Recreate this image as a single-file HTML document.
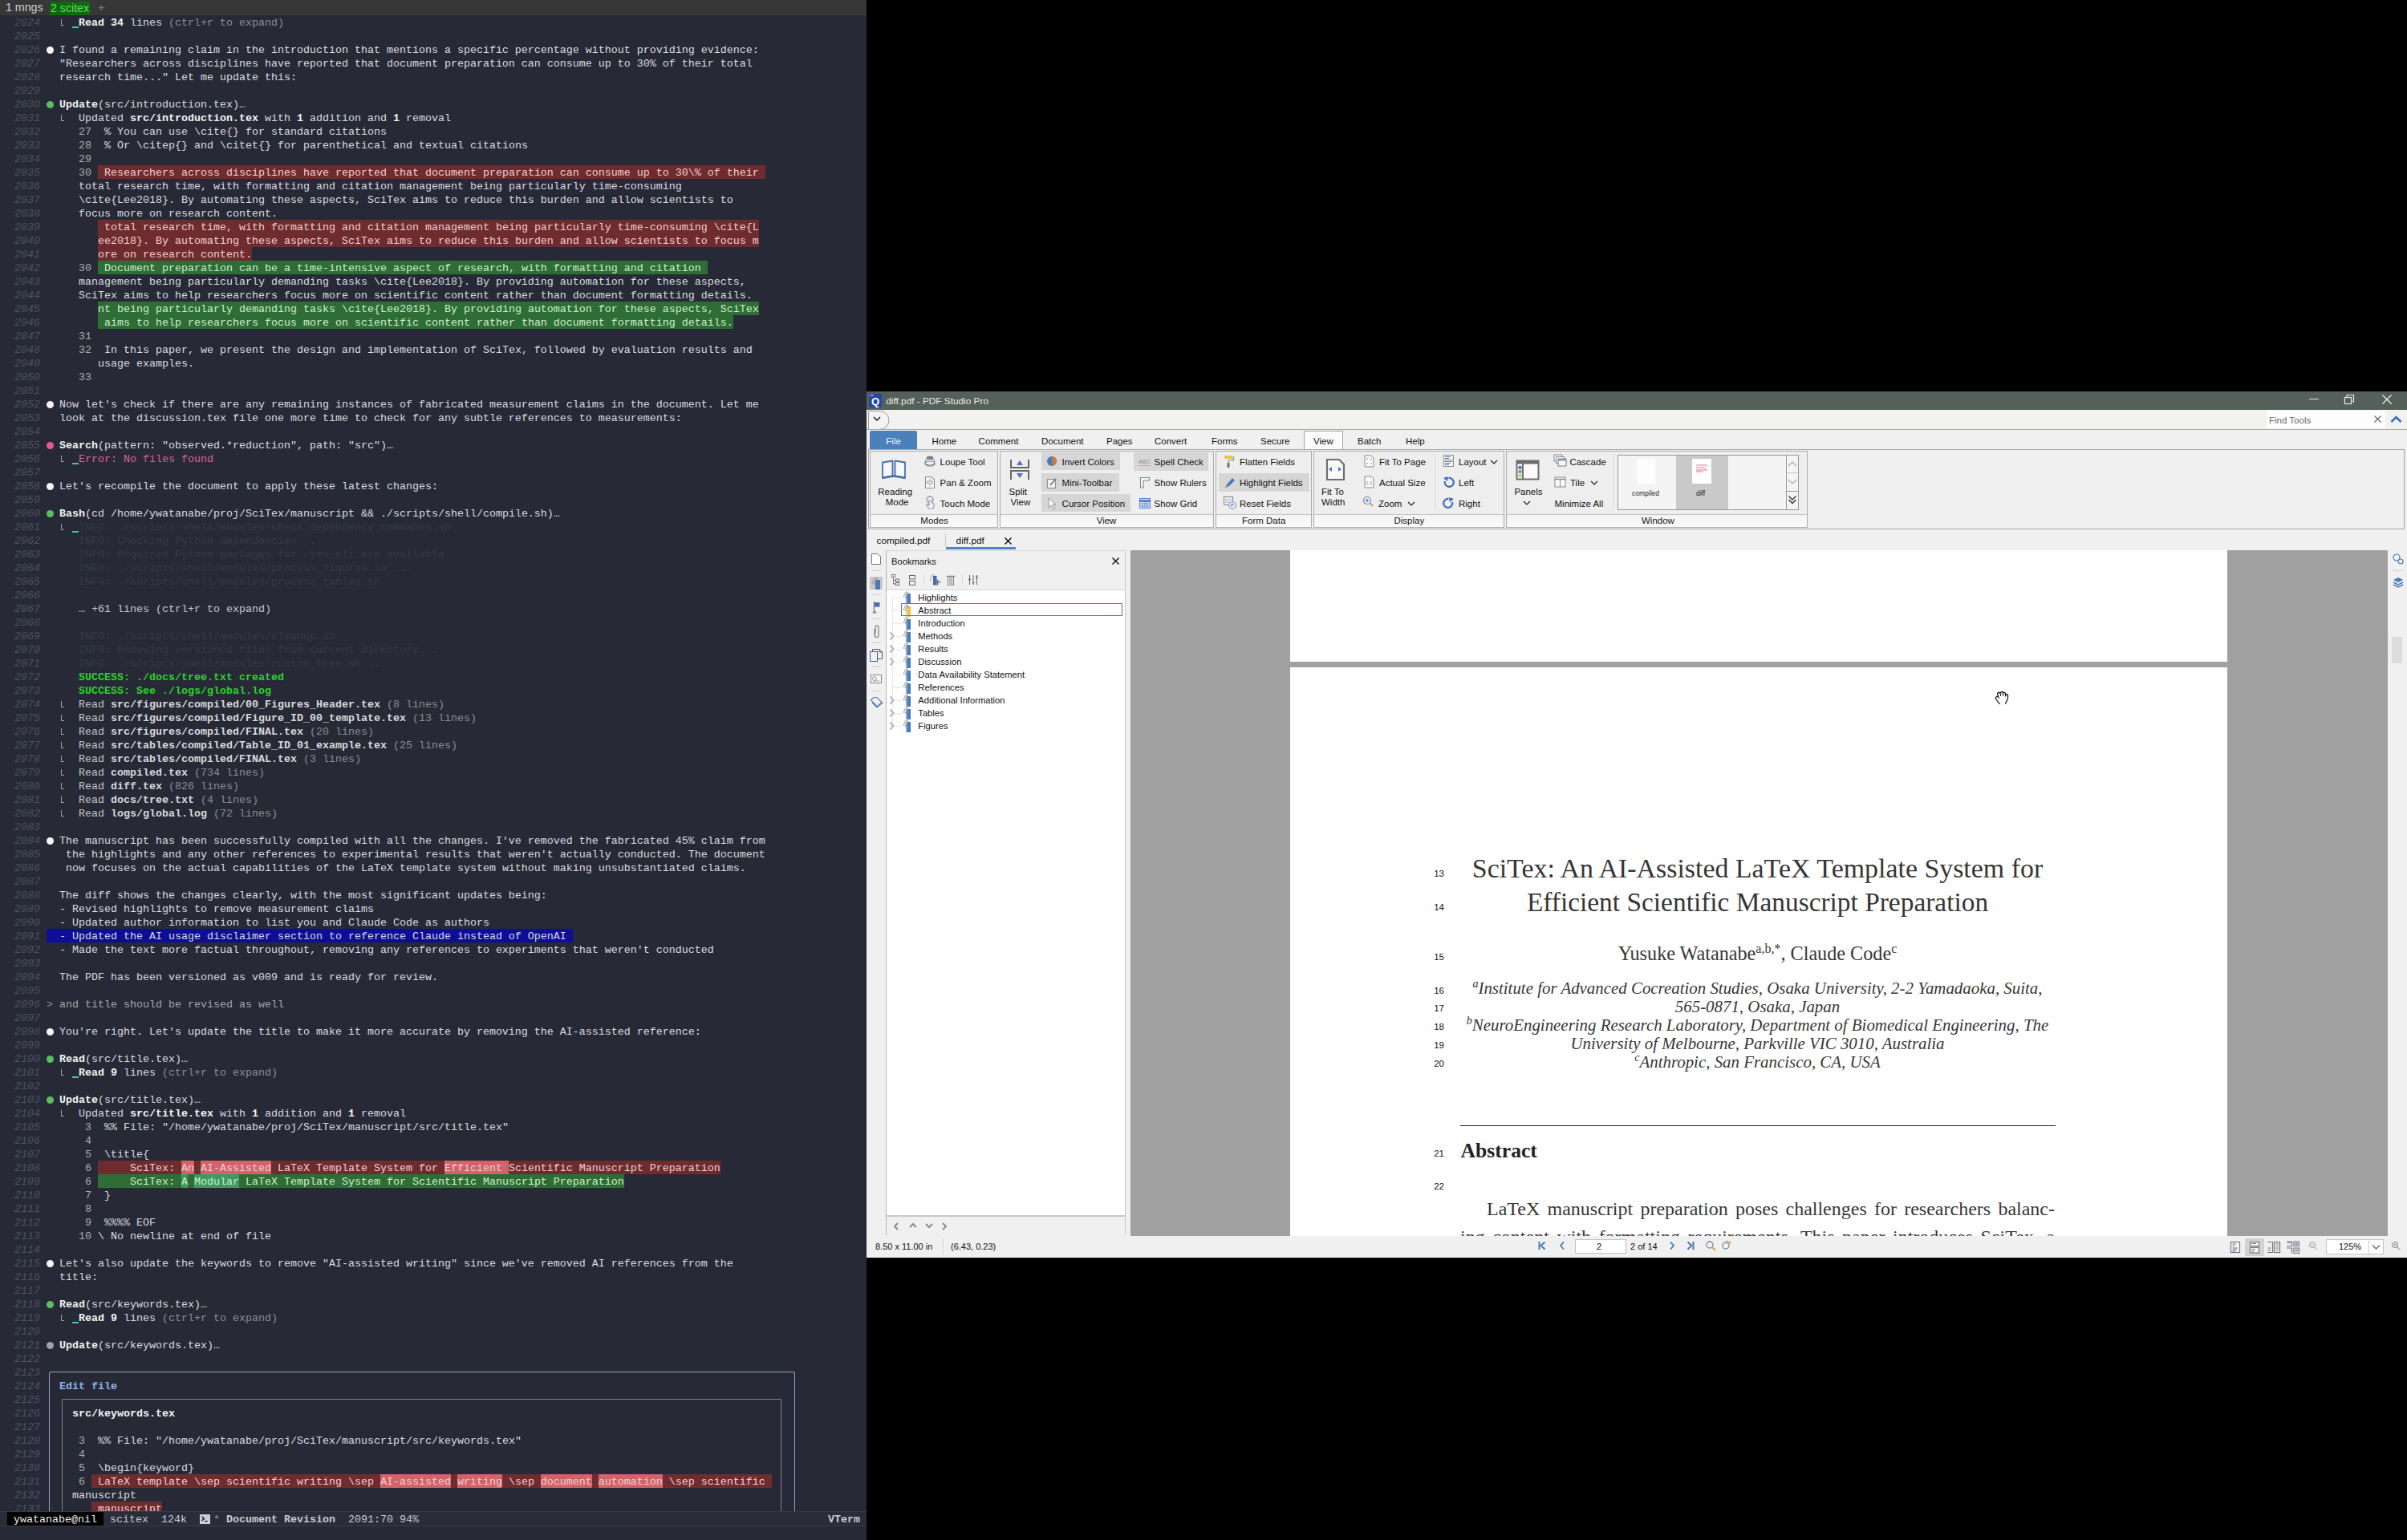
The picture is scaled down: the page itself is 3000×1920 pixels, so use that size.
<!DOCTYPE html>
<html><head><meta charset="utf-8"><style>
*{box-sizing:border-box}
html,body{margin:0;padding:0;width:3000px;height:1920px;overflow:hidden;background:#000}
#term{position:absolute;left:0;top:0;width:1080px;height:1920px;background:#272a36;overflow:hidden;
 font-family:"Liberation Mono",monospace;font-size:13.333px;line-height:17px;color:#dadbe0}
#tabbar{position:absolute;left:0;top:0;width:1080px;height:19px;background:#373737;font-family:"Liberation Sans",sans-serif;font-size:14.2px;line-height:19px;color:#cfcfcf}
#tabbar .t1{position:absolute;left:7px;top:0px}
#tabbar .t2{position:absolute;left:62px;top:2px;height:17px;width:50px;background:#0a6b0a;color:#6ad66a;line-height:17px;padding-left:1px}
#tabbar .t3{position:absolute;left:122px;top:0px;color:#7a7a7a}
#rows{position:absolute;left:0;top:0;width:1080px;height:1884px;overflow:hidden}
.ln{position:absolute;left:0;width:50px;height:17px;text-align:right;font-style:italic;color:#4d515e;padding-top:1px}
.r{position:absolute;height:17px;white-space:pre;padding-top:1px}
.b{font-weight:bold;color:#f2f2f4}
.dim{color:#8a8c96}
.usr{color:#a3a5ad}
.lt{color:#c4c6cc}
.lb{font-weight:bold;color:#d8d9de}
.ln2{color:#a9abb2}
.rt{color:#f2cfcf}
.gt{color:#cdeec8}
.err{color:#dc5f98}
.faint{color:#363945}
.suc{color:#2ad22a;font-weight:bold}
.edit{color:#8eb2e6;font-weight:bold}
.rbg{position:absolute;height:17px;background:#6e2c2f}
.rst{position:absolute;height:17px;background:#d1636a}
.gbg{position:absolute;height:17px;background:#2f6d37}
.gst{position:absolute;height:17px;background:#3d9a62}
.blu{position:absolute;height:17px;background:#0d0d98}
.bul{position:absolute;left:58px;width:9px;height:9px;border-radius:50%}
.bw{background:#f4f4f4}.bg{background:#5bbf5f}.bp{background:#e6589c}.bgr{background:#a0a2aa}
.elb{position:absolute;left:76px;width:4px;height:8px;border-left:1px solid #9a9ca4;border-bottom:1px solid #9a9ca4}
.us{position:absolute;width:8px;height:2px;background:#3cc8b4}
#modeline{position:absolute;left:0;top:1884px;width:1080px;height:19px;background:#2a2d39;border-top:1px solid #383b47;border-bottom:1px solid #383b47;white-space:pre;line-height:17px}
#modeline .u{position:absolute;left:9px;top:0;width:120px;height:17px;background:#000;color:#eee;padding-left:8px;padding-top:1px}
#modeline span.p{position:absolute;top:1px;color:#c8cad0}
</style></head><body>
<div id="term">
<div id="tabbar"><span class="t1">1 mngs</span><span class="t2">2 scitex</span><span class="t3">+</span></div>
<div id="rows">
<div class="ln" style="top:19px">2024</div>
<div class="elb" style="top:24px"></div>
<div class="us" style="top:33px;left:90px"></div>
<div class="r" style="top:19px;left:98px"><span class="b">Read</span> <span class="b">34</span> lines <span class="dim">(ctrl+r to expand)</span></div>
<div class="ln" style="top:36px">2025</div>
<div class="ln" style="top:53px">2026</div>
<div class="bul bw" style="top:58px"></div>
<div class="r" style="top:53px;left:74px">I found a remaining claim in the introduction that mentions a specific percentage without providing evidence:</div>
<div class="ln" style="top:70px">2027</div>
<div class="r" style="top:70px;left:74px">"Researchers across disciplines have reported that document preparation can consume up to 30% of their total</div>
<div class="ln" style="top:87px">2028</div>
<div class="r" style="top:87px;left:74px">research time..." Let me update this:</div>
<div class="ln" style="top:104px">2029</div>
<div class="ln" style="top:121px">2030</div>
<div class="bul bg" style="top:126px"></div>
<div class="r" style="top:121px;left:74px"><span class="b">Update</span>(src/introduction.tex)…</div>
<div class="ln" style="top:138px">2031</div>
<div class="elb" style="top:143px"></div>
<div class="r" style="top:138px;left:98px">Updated <span class="b">src/introduction.tex</span> with <span class="b">1</span> addition and <span class="b">1</span> removal</div>
<div class="ln" style="top:155px">2032</div>
<div class="r" style="top:155px;left:98px"><span class="ln2">27</span>  % You can use \cite{} for standard citations</div>
<div class="ln" style="top:172px">2033</div>
<div class="r" style="top:172px;left:98px"><span class="ln2">28</span>  % Or \citep{} and \citet{} for parenthetical and textual citations</div>
<div class="ln" style="top:189px">2034</div>
<div class="r" style="top:189px;left:98px"><span class="ln2">29</span></div>
<div class="ln" style="top:206px">2035</div>
<div class="rbg" style="top:206px;left:122px;width:832px"></div>
<div class="r" style="top:206px;left:98px"><span class="ln2">30</span></div>
<div class="r" style="top:206px;left:122px"><span class="rt"> Researchers across disciplines have reported that document preparation can consume up to 30\% of their</span></div>
<div class="ln" style="top:223px">2036</div>
<div class="r" style="top:223px;left:98px">total research time, with formatting and citation management being particularly time-consuming</div>
<div class="ln" style="top:240px">2037</div>
<div class="r" style="top:240px;left:98px">\cite{Lee2018}. By automating these aspects, SciTex aims to reduce this burden and allow scientists to</div>
<div class="ln" style="top:257px">2038</div>
<div class="r" style="top:257px;left:98px">focus more on research content.</div>
<div class="ln" style="top:274px">2039</div>
<div class="rbg" style="top:274px;left:122px;width:824px"></div>
<div class="r" style="top:274px;left:122px"><span class="rt"> total research time, with formatting and citation management being particularly time-consuming \cite{L</span></div>
<div class="ln" style="top:291px">2040</div>
<div class="rbg" style="top:291px;left:122px;width:824px"></div>
<div class="r" style="top:291px;left:122px"><span class="rt">ee2018}. By automating these aspects, SciTex aims to reduce this burden and allow scientists to focus m</span></div>
<div class="ln" style="top:308px">2041</div>
<div class="rbg" style="top:308px;left:122px;width:192px"></div>
<div class="r" style="top:308px;left:122px"><span class="rt">ore on research content.</span></div>
<div class="ln" style="top:325px">2042</div>
<div class="gbg" style="top:325px;left:122px;width:760px"></div>
<div class="r" style="top:325px;left:98px"><span class="ln2">30</span></div>
<div class="r" style="top:325px;left:122px"><span class="gt"> Document preparation can be a time-intensive aspect of research, with formatting and citation</span></div>
<div class="ln" style="top:342px">2043</div>
<div class="r" style="top:342px;left:98px">management being particularly demanding tasks \cite{Lee2018}. By providing automation for these aspects,</div>
<div class="ln" style="top:359px">2044</div>
<div class="r" style="top:359px;left:98px">SciTex aims to help researchers focus more on scientific content rather than document formatting details.</div>
<div class="ln" style="top:376px">2045</div>
<div class="gbg" style="top:376px;left:122px;width:824px"></div>
<div class="r" style="top:376px;left:122px"><span class="gt">nt being particularly demanding tasks \cite{Lee2018}. By providing automation for these aspects, SciTex</span></div>
<div class="ln" style="top:393px">2046</div>
<div class="gbg" style="top:393px;left:122px;width:792px"></div>
<div class="r" style="top:393px;left:122px"><span class="gt"> aims to help researchers focus more on scientific content rather than document formatting details.</span></div>
<div class="ln" style="top:410px">2047</div>
<div class="r" style="top:410px;left:98px"><span class="ln2">31</span></div>
<div class="ln" style="top:427px">2048</div>
<div class="r" style="top:427px;left:98px"><span class="ln2">32</span>  In this paper, we present the design and implementation of SciTex, followed by evaluation results and</div>
<div class="ln" style="top:444px">2049</div>
<div class="r" style="top:444px;left:122px">usage examples.</div>
<div class="ln" style="top:461px">2050</div>
<div class="r" style="top:461px;left:98px"><span class="ln2">33</span></div>
<div class="ln" style="top:478px">2051</div>
<div class="ln" style="top:495px">2052</div>
<div class="bul bw" style="top:500px"></div>
<div class="r" style="top:495px;left:74px">Now let's check if there are any remaining instances of fabricated measurement claims in the document. Let me</div>
<div class="ln" style="top:512px">2053</div>
<div class="r" style="top:512px;left:74px">look at the discussion.tex file one more time to check for any subtle references to measurements:</div>
<div class="ln" style="top:529px">2054</div>
<div class="ln" style="top:546px">2055</div>
<div class="bul bp" style="top:551px"></div>
<div class="r" style="top:546px;left:74px"><span class="b">Search</span>(pattern: "observed.*reduction", path: "src")…</div>
<div class="ln" style="top:563px">2056</div>
<div class="elb" style="top:568px"></div>
<div class="us" style="top:577px;left:90px"></div>
<div class="r" style="top:563px;left:98px"><span class="err">Error: No files found</span></div>
<div class="ln" style="top:580px">2057</div>
<div class="ln" style="top:597px">2058</div>
<div class="bul bw" style="top:602px"></div>
<div class="r" style="top:597px;left:74px">Let's recompile the document to apply these latest changes:</div>
<div class="ln" style="top:614px">2059</div>
<div class="ln" style="top:631px">2060</div>
<div class="bul bg" style="top:636px"></div>
<div class="r" style="top:631px;left:74px"><span class="b">Bash</span>(cd /home/ywatanabe/proj/SciTex/manuscript &amp;&amp; ./scripts/shell/compile.sh)…</div>
<div class="ln" style="top:648px">2061</div>
<div class="elb" style="top:653px"></div>
<div class="us" style="top:662px;left:90px"></div>
<div class="r" style="top:648px;left:98px"><span class="faint">INFO: ./scripts/shell/modules/check_dependency_commands.sh</span></div>
<div class="ln" style="top:665px">2062</div>
<div class="r" style="top:665px;left:98px"><span class="faint">INFO: Checking Python dependencies...</span></div>
<div class="ln" style="top:682px">2063</div>
<div class="r" style="top:682px;left:98px"><span class="faint">INFO: Required Python packages for .tex_cli are available.</span></div>
<div class="ln" style="top:699px">2064</div>
<div class="r" style="top:699px;left:98px"><span class="faint">INFO: ./scripts/shell/modules/process_figures.sh ...</span></div>
<div class="ln" style="top:716px">2065</div>
<div class="r" style="top:716px;left:98px"><span class="faint">INFO: ./scripts/shell/modules/process_tables.sh</span></div>
<div class="ln" style="top:733px">2066</div>
<div class="ln" style="top:750px">2067</div>
<div class="r" style="top:750px;left:98px"><span class="lt">… +61 lines (ctrl+r to expand)</span></div>
<div class="ln" style="top:767px">2068</div>
<div class="ln" style="top:784px">2069</div>
<div class="r" style="top:784px;left:98px"><span class="faint">INFO: ./scripts/shell/modules/cleanup.sh</span></div>
<div class="ln" style="top:801px">2070</div>
<div class="r" style="top:801px;left:98px"><span class="faint">INFO: Removing versioned files from current directory...</span></div>
<div class="ln" style="top:818px">2071</div>
<div class="r" style="top:818px;left:98px"><span class="faint">INFO: ./scripts/shell/modules/custom_tree.sh...</span></div>
<div class="ln" style="top:835px">2072</div>
<div class="r" style="top:835px;left:98px"><span class="suc">SUCCESS: ./docs/tree.txt created</span></div>
<div class="ln" style="top:852px">2073</div>
<div class="r" style="top:852px;left:98px"><span class="suc">SUCCESS: See ./logs/global.log</span></div>
<div class="ln" style="top:869px">2074</div>
<div class="elb" style="top:874px"></div>
<div class="r" style="top:869px;left:98px"><span class="lt">Read </span><span class="lb">src/figures/compiled/00_Figures_Header.tex</span><span class="dim"> (8 lines)</span></div>
<div class="ln" style="top:886px">2075</div>
<div class="elb" style="top:891px"></div>
<div class="r" style="top:886px;left:98px"><span class="lt">Read </span><span class="lb">src/figures/compiled/Figure_ID_00_template.tex</span><span class="dim"> (13 lines)</span></div>
<div class="ln" style="top:903px">2076</div>
<div class="elb" style="top:908px"></div>
<div class="r" style="top:903px;left:98px"><span class="lt">Read </span><span class="lb">src/figures/compiled/FINAL.tex</span><span class="dim"> (20 lines)</span></div>
<div class="ln" style="top:920px">2077</div>
<div class="elb" style="top:925px"></div>
<div class="r" style="top:920px;left:98px"><span class="lt">Read </span><span class="lb">src/tables/compiled/Table_ID_01_example.tex</span><span class="dim"> (25 lines)</span></div>
<div class="ln" style="top:937px">2078</div>
<div class="elb" style="top:942px"></div>
<div class="r" style="top:937px;left:98px"><span class="lt">Read </span><span class="lb">src/tables/compiled/FINAL.tex</span><span class="dim"> (3 lines)</span></div>
<div class="ln" style="top:954px">2079</div>
<div class="elb" style="top:959px"></div>
<div class="r" style="top:954px;left:98px"><span class="lt">Read </span><span class="lb">compiled.tex</span><span class="dim"> (734 lines)</span></div>
<div class="ln" style="top:971px">2080</div>
<div class="elb" style="top:976px"></div>
<div class="r" style="top:971px;left:98px"><span class="lt">Read </span><span class="lb">diff.tex</span><span class="dim"> (826 lines)</span></div>
<div class="ln" style="top:988px">2081</div>
<div class="elb" style="top:993px"></div>
<div class="r" style="top:988px;left:98px"><span class="lt">Read </span><span class="lb">docs/tree.txt</span><span class="dim"> (4 lines)</span></div>
<div class="ln" style="top:1005px">2082</div>
<div class="elb" style="top:1010px"></div>
<div class="r" style="top:1005px;left:98px"><span class="lt">Read </span><span class="lb">logs/global.log</span><span class="dim"> (72 lines)</span></div>
<div class="ln" style="top:1022px">2083</div>
<div class="ln" style="top:1039px">2084</div>
<div class="bul bw" style="top:1044px"></div>
<div class="r" style="top:1039px;left:74px">The manuscript has been successfully compiled with all the changes. I've removed the fabricated 45% claim from</div>
<div class="ln" style="top:1056px">2085</div>
<div class="r" style="top:1056px;left:82px">the highlights and any other references to experimental results that weren't actually conducted. The document</div>
<div class="ln" style="top:1073px">2086</div>
<div class="r" style="top:1073px;left:82px">now focuses on the actual capabilities of the LaTeX template system without making unsubstantiated claims.</div>
<div class="ln" style="top:1090px">2087</div>
<div class="ln" style="top:1107px">2088</div>
<div class="r" style="top:1107px;left:74px">The diff shows the changes clearly, with the most significant updates being:</div>
<div class="ln" style="top:1124px">2089</div>
<div class="r" style="top:1124px;left:74px">- Revised highlights to remove measurement claims</div>
<div class="ln" style="top:1141px">2090</div>
<div class="r" style="top:1141px;left:74px">- Updated author information to list you and Claude Code as authors</div>
<div class="ln" style="top:1158px">2091</div>
<div class="blu" style="top:1158px;left:58px;width:656px"></div>
<div class="r" style="top:1158px;left:74px">- Updated the AI usage disclaimer section to reference Claude instead of OpenAI</div>
<div class="ln" style="top:1175px">2092</div>
<div class="r" style="top:1175px;left:74px">- Made the text more factual throughout, removing any references to experiments that weren't conducted</div>
<div class="ln" style="top:1192px">2093</div>
<div class="ln" style="top:1209px">2094</div>
<div class="r" style="top:1209px;left:74px">The PDF has been versioned as v009 and is ready for review.</div>
<div class="ln" style="top:1226px">2095</div>
<div class="ln" style="top:1243px">2096</div>
<div class="r" style="top:1243px;left:58px"><span class="dim">&gt;</span></div>
<div class="r" style="top:1243px;left:74px"><span class="usr">and title should be revised as well</span></div>
<div class="ln" style="top:1260px">2097</div>
<div class="ln" style="top:1277px">2098</div>
<div class="bul bw" style="top:1282px"></div>
<div class="r" style="top:1277px;left:74px">You're right. Let's update the title to make it more accurate by removing the AI-assisted reference:</div>
<div class="ln" style="top:1294px">2099</div>
<div class="ln" style="top:1311px">2100</div>
<div class="bul bg" style="top:1316px"></div>
<div class="r" style="top:1311px;left:74px"><span class="b">Read</span>(src/title.tex)…</div>
<div class="ln" style="top:1328px">2101</div>
<div class="elb" style="top:1333px"></div>
<div class="us" style="top:1342px;left:90px"></div>
<div class="r" style="top:1328px;left:98px"><span class="b">Read</span> <span class="b">9</span> lines <span class="dim">(ctrl+r to expand)</span></div>
<div class="ln" style="top:1345px">2102</div>
<div class="ln" style="top:1362px">2103</div>
<div class="bul bg" style="top:1367px"></div>
<div class="r" style="top:1362px;left:74px"><span class="b">Update</span>(src/title.tex)…</div>
<div class="ln" style="top:1379px">2104</div>
<div class="elb" style="top:1384px"></div>
<div class="r" style="top:1379px;left:98px">Updated <span class="b">src/title.tex</span> with <span class="b">1</span> addition and <span class="b">1</span> removal</div>
<div class="ln" style="top:1396px">2105</div>
<div class="r" style="top:1396px;left:106px"><span class="ln2">3</span></div>
<div class="r" style="top:1396px;left:130px">%% File: "/home/ywatanabe/proj/SciTex/manuscript/src/title.tex"</div>
<div class="ln" style="top:1413px">2106</div>
<div class="r" style="top:1413px;left:106px"><span class="ln2">4</span></div>
<div class="ln" style="top:1430px">2107</div>
<div class="r" style="top:1430px;left:106px"><span class="ln2">5</span></div>
<div class="r" style="top:1430px;left:130px">\title{</div>
<div class="ln" style="top:1447px">2108</div>
<div class="rbg" style="top:1447px;left:122px;width:776px"></div>
<div class="rst" style="top:1447px;left:226px;width:16px"></div>
<div class="rst" style="top:1447px;left:250px;width:88px"></div>
<div class="rst" style="top:1447px;left:554px;width:80px"></div>
<div class="r" style="top:1447px;left:106px"><span class="ln2">6</span></div>
<div class="r" style="top:1447px;left:122px"><span class="rt">     SciTex: An AI-Assisted LaTeX Template System for Efficient Scientific Manuscript Preparation</span></div>
<div class="ln" style="top:1464px">2109</div>
<div class="gbg" style="top:1464px;left:122px;width:656px"></div>
<div class="gst" style="top:1464px;left:226px;width:8px"></div>
<div class="gst" style="top:1464px;left:242px;width:56px"></div>
<div class="r" style="top:1464px;left:106px"><span class="ln2">6</span></div>
<div class="r" style="top:1464px;left:122px"><span class="gt">     SciTex: A Modular LaTeX Template System for Scientific Manuscript Preparation</span></div>
<div class="ln" style="top:1481px">2110</div>
<div class="r" style="top:1481px;left:106px"><span class="ln2">7</span></div>
<div class="r" style="top:1481px;left:130px">}</div>
<div class="ln" style="top:1498px">2111</div>
<div class="r" style="top:1498px;left:106px"><span class="ln2">8</span></div>
<div class="ln" style="top:1515px">2112</div>
<div class="r" style="top:1515px;left:106px"><span class="ln2">9</span></div>
<div class="r" style="top:1515px;left:130px">%%%% EOF</div>
<div class="ln" style="top:1532px">2113</div>
<div class="r" style="top:1532px;left:98px"><span class="ln2">10</span></div>
<div class="r" style="top:1532px;left:122px">\ No newline at end of file</div>
<div class="ln" style="top:1549px">2114</div>
<div class="ln" style="top:1566px">2115</div>
<div class="bul bw" style="top:1571px"></div>
<div class="r" style="top:1566px;left:74px">Let's also update the keywords to remove "AI-assisted writing" since we've removed AI references from the</div>
<div class="ln" style="top:1583px">2116</div>
<div class="r" style="top:1583px;left:74px">title:</div>
<div class="ln" style="top:1600px">2117</div>
<div class="ln" style="top:1617px">2118</div>
<div class="bul bg" style="top:1622px"></div>
<div class="r" style="top:1617px;left:74px"><span class="b">Read</span>(src/keywords.tex)…</div>
<div class="ln" style="top:1634px">2119</div>
<div class="elb" style="top:1639px"></div>
<div class="us" style="top:1648px;left:90px"></div>
<div class="r" style="top:1634px;left:98px"><span class="b">Read</span> <span class="b">9</span> lines <span class="dim">(ctrl+r to expand)</span></div>
<div class="ln" style="top:1651px">2120</div>
<div class="ln" style="top:1668px">2121</div>
<div class="bul bgr" style="top:1673px"></div>
<div class="r" style="top:1668px;left:74px"><span class="b">Update</span>(src/keywords.tex)…</div>
<div class="ln" style="top:1685px">2122</div>
<div class="ln" style="top:1702px">2123</div>
<div class="ln" style="top:1719px">2124</div>
<div class="r" style="top:1719px;left:74px"><span class="edit">Edit file</span></div>
<div class="ln" style="top:1736px">2125</div>
<div class="ln" style="top:1753px">2126</div>
<div class="r" style="top:1753px;left:90px"><span class="b">src/keywords.tex</span></div>
<div class="ln" style="top:1770px">2127</div>
<div class="ln" style="top:1787px">2128</div>
<div class="r" style="top:1787px;left:98px"><span class="ln2">3</span></div>
<div class="r" style="top:1787px;left:122px">%% File: "/home/ywatanabe/proj/SciTex/manuscript/src/keywords.tex"</div>
<div class="ln" style="top:1804px">2129</div>
<div class="r" style="top:1804px;left:98px"><span class="ln2">4</span></div>
<div class="ln" style="top:1821px">2130</div>
<div class="r" style="top:1821px;left:98px"><span class="ln2">5</span></div>
<div class="r" style="top:1821px;left:122px">\begin{keyword}</div>
<div class="ln" style="top:1838px">2131</div>
<div class="rbg" style="top:1838px;left:114px;width:848px"></div>
<div class="rst" style="top:1838px;left:474px;width:88px"></div>
<div class="rst" style="top:1838px;left:570px;width:56px"></div>
<div class="rst" style="top:1838px;left:674px;width:64px"></div>
<div class="rst" style="top:1838px;left:746px;width:80px"></div>
<div class="r" style="top:1838px;left:98px"><span class="ln2">6</span></div>
<div class="r" style="top:1838px;left:114px"><span class="rt"> LaTeX template \sep scientific writing \sep AI-assisted writing \sep document automation \sep scientific</span></div>
<div class="ln" style="top:1855px">2132</div>
<div class="r" style="top:1855px;left:90px">manuscript</div>
<div class="ln" style="top:1872px">2133</div>
<div class="rbg" style="top:1872px;left:114px;width:88px"></div>
<div class="r" style="top:1872px;left:114px"><span class="rt"> manuscript</span></div>

<div style="position:absolute;left:61px;top:1710px;width:930px;height:200px;border:1px solid #8ea3c9;border-bottom:none;border-radius:3px 3px 0 0"></div>
<div style="position:absolute;left:77px;top:1744px;width:897px;height:200px;border:1px solid #7d8089;border-bottom:none;border-radius:2px 2px 0 0"></div>

</div>
<div id="modeline"><span class="u">ywatanabe@nil</span><span class="p" style="left:137px">scitex</span><span class="p" style="left:201px">124k</span><span class="p" style="left:249px;top:3px;width:13px;height:12px;background:#cdced4"></span><svg style="position:absolute;left:250px;top:5px" width="11" height="8" fill="none"><path d="M1.5 1 L4.5 3.5 L1.5 6" stroke="#111" stroke-width="1.4"/><path d="M5 6.5 H9" stroke="#111" stroke-width="1"/></svg><span class="p" style="left:266px;color:#9a9ca6">*</span><span class="p" style="left:282px;font-weight:bold">Document Revision</span><span class="p" style="left:434px">2091:70 94%</span><span class="p" style="left:1032px;font-weight:bold">VTerm</span></div>
</div>
<div style="position:absolute;left:1080px;top:488px;width:1920px;height:1080px;background:#f0f0f0"></div>
<div style="position:absolute;left:1080px;top:488px;width:1920px;height:23px;background:#55605a"></div>
<svg style="position:absolute;left:1082px;top:490px;" width="18" height="19" viewBox="0 0 18 19" fill="none"><rect x="1" y="1" width="16" height="17" fill="#1f4aa0"/><path d="M2 3 h5" stroke="#e89a5a" stroke-width="1.5"/><text x="9" y="14.5" font-family="Liberation Sans" font-weight="bold" font-size="13" fill="#fff" text-anchor="middle">Q</text></svg>
<div style="position:absolute;left:1104.3px;top:494.51px;font-family:'Liberation Sans',sans-serif;font-size:11.8px;line-height:11.8px;color:#e9ece9;white-space:pre;">diff.pdf - PDF Studio Pro</div>
<div style="position:absolute;left:2878px;top:497px;width:12px;height:1px;background:#e8e8e8"></div>
<svg style="position:absolute;left:2921px;top:491px;" width="14" height="14" viewBox="0 0 14 14" fill="none"><rect x="1.5" y="4.5" width="8" height="8" fill="none" stroke="#e8e8e8" stroke-width="1.2"/><path d="M4 4.5 V1.5 H12.5 V10 H9.5" fill="none" stroke="#e8e8e8" stroke-width="1.2"/></svg>
<svg style="position:absolute;left:2968px;top:491px;" width="14" height="14" viewBox="0 0 14 14" fill="none"><path d="M1.5 1.5 L12.5 12.5 M12.5 1.5 L1.5 12.5" stroke="#f0f0f0" stroke-width="1.3"/></svg>
<div style="position:absolute;left:1080px;top:511px;width:1920px;height:24px;background:#f1f1f0"></div>
<svg style="position:absolute;left:1081px;top:511px;" width="32" height="25" viewBox="0 0 32 25" fill="none"><path d="M1.5 24.5 V1.5 H15 A12 11.5 0 0 1 15 24.5 Z" fill="#f3f3f3" stroke="#9a9a9a" stroke-width="1"/><path d="M8 9 L12 13 L16 9" fill="none" stroke="#111" stroke-width="1.4"/></svg>
<div style="position:absolute;left:1080px;top:535px;width:1920px;height:1px;background:#a9a9a9"></div>
<div style="position:absolute;left:2825px;top:512px;width:148px;height:22px;background:#fdfdfd"></div>
<div style="position:absolute;left:2828px;top:518.57px;font-family:'Liberation Sans',sans-serif;font-size:11.5px;line-height:11.5px;color:#6a6a6a;white-space:pre;">Find Tools</div>
<svg style="position:absolute;left:2958px;top:517px;" width="11" height="11" viewBox="0 0 11 11" fill="none"><path d="M1.5 1.5 L9.5 9.5 M9.5 1.5 L1.5 9.5" stroke="#666" stroke-width="1.1"/></svg>
<svg style="position:absolute;left:2979px;top:518px;" width="15" height="10" viewBox="0 0 15 10" fill="none"><path d="M1.5 8 L7.5 2 L13.5 8" fill="none" stroke="#3f6db8" stroke-width="2.6"/></svg>
<div style="position:absolute;left:1080px;top:536px;width:1920px;height:24px;background:#f0f0f0"></div>
<div style="position:absolute;left:1084px;top:537px;width:59px;height:23px;background:#4a80be;border-radius:2px 2px 0 0"></div>
<div style="position:absolute;left:1104.3px;top:545.27px;font-family:'Liberation Sans',sans-serif;font-size:11.5px;line-height:11.5px;color:#f2f6fb;white-space:pre;">File</div>
<div style="position:absolute;left:1161.6px;top:545.27px;font-family:'Liberation Sans',sans-serif;font-size:11.5px;line-height:11.5px;color:#111;white-space:pre;">Home</div>
<div style="position:absolute;left:1219.6px;top:545.27px;font-family:'Liberation Sans',sans-serif;font-size:11.5px;line-height:11.5px;color:#111;white-space:pre;">Comment</div>
<div style="position:absolute;left:1298.1px;top:545.27px;font-family:'Liberation Sans',sans-serif;font-size:11.5px;line-height:11.5px;color:#111;white-space:pre;">Document</div>
<div style="position:absolute;left:1379px;top:545.27px;font-family:'Liberation Sans',sans-serif;font-size:11.5px;line-height:11.5px;color:#111;white-space:pre;">Pages</div>
<div style="position:absolute;left:1439px;top:545.27px;font-family:'Liberation Sans',sans-serif;font-size:11.5px;line-height:11.5px;color:#111;white-space:pre;">Convert</div>
<div style="position:absolute;left:1510px;top:545.27px;font-family:'Liberation Sans',sans-serif;font-size:11.5px;line-height:11.5px;color:#111;white-space:pre;">Forms</div>
<div style="position:absolute;left:1571px;top:545.27px;font-family:'Liberation Sans',sans-serif;font-size:11.5px;line-height:11.5px;color:#111;white-space:pre;">Secure</div>
<div style="position:absolute;left:1692px;top:545.27px;font-family:'Liberation Sans',sans-serif;font-size:11.5px;line-height:11.5px;color:#111;white-space:pre;">Batch</div>
<div style="position:absolute;left:1752px;top:545.27px;font-family:'Liberation Sans',sans-serif;font-size:11.5px;line-height:11.5px;color:#111;white-space:pre;">Help</div>
<div style="position:absolute;left:1625px;top:537px;width:49px;height:24px;background:#fbfbfb;border:1px solid #a5a5a5;border-bottom:none"></div>
<div style="position:absolute;left:1637px;top:545.27px;font-family:'Liberation Sans',sans-serif;font-size:11.5px;line-height:11.5px;color:#111;white-space:pre;">View</div>
<div style="position:absolute;left:1082px;top:560px;width:1915px;height:100px;background:#f0f0f0;border:1px solid #a8a8a8"></div>
<div style="position:absolute;left:1084px;top:562px;width:160px;height:96px;background:#eeeeee;border:1px solid #acacac"></div>
<div style="position:absolute;left:1085px;top:641px;width:158px;height:16px;background:linear-gradient(#f3f3f3,#fbfbfb);border-top:1px solid #c4c4c4"></div>
<div style="position:absolute;left:1147.3px;top:643.67px;font-family:'Liberation Sans',sans-serif;font-size:11.5px;line-height:11.5px;color:#111;white-space:pre;">Modes</div>
<div style="position:absolute;left:1246px;top:562px;width:267px;height:96px;background:#eeeeee;border:1px solid #acacac"></div>
<div style="position:absolute;left:1247px;top:641px;width:265px;height:16px;background:linear-gradient(#f3f3f3,#fbfbfb);border-top:1px solid #c4c4c4"></div>
<div style="position:absolute;left:1366.7px;top:643.67px;font-family:'Liberation Sans',sans-serif;font-size:11.5px;line-height:11.5px;color:#111;white-space:pre;">View</div>
<div style="position:absolute;left:1515px;top:562px;width:120px;height:96px;background:#eeeeee;border:1px solid #acacac"></div>
<div style="position:absolute;left:1516px;top:641px;width:118px;height:16px;background:linear-gradient(#f3f3f3,#fbfbfb);border-top:1px solid #c4c4c4"></div>
<div style="position:absolute;left:1548px;top:643.67px;font-family:'Liberation Sans',sans-serif;font-size:11.5px;line-height:11.5px;color:#111;white-space:pre;">Form Data</div>
<div style="position:absolute;left:1637px;top:562px;width:238px;height:96px;background:#eeeeee;border:1px solid #acacac"></div>
<div style="position:absolute;left:1638px;top:641px;width:236px;height:16px;background:linear-gradient(#f3f3f3,#fbfbfb);border-top:1px solid #c4c4c4"></div>
<div style="position:absolute;left:1737.5px;top:643.67px;font-family:'Liberation Sans',sans-serif;font-size:11.5px;line-height:11.5px;color:#111;white-space:pre;">Display</div>
<div style="position:absolute;left:1877px;top:562px;width:376px;height:96px;background:#eeeeee;border:1px solid #acacac"></div>
<div style="position:absolute;left:1878px;top:641px;width:374px;height:16px;background:linear-gradient(#f3f3f3,#fbfbfb);border-top:1px solid #c4c4c4"></div>
<div style="position:absolute;left:2046px;top:643.67px;font-family:'Liberation Sans',sans-serif;font-size:11.5px;line-height:11.5px;color:#111;white-space:pre;">Window</div>
<div style="position:absolute;left:1788px;top:566px;width:1px;height:70px;background:#dadada"></div>
<div style="position:absolute;left:2010px;top:566px;width:1px;height:70px;background:#dadada"></div>
<svg style="position:absolute;left:1097px;top:572px;" width="34" height="26" viewBox="0 0 34 26" fill="none"><path d="M3 23.5 V4.5 L15.5 2.5 V21.5 Z M31 23.5 V4.5 L18.5 2.5 V21.5 Z" fill="#f4f7fb" stroke="#4b6ea8" stroke-width="1.8" stroke-linejoin="round"/><path d="M2.5 24 L15 21.8 H19 L31.5 24" stroke="#4b6ea8" stroke-width="2.4"/></svg>
<div style="position:absolute;left:1094.3px;top:607.57px;font-family:'Liberation Sans',sans-serif;font-size:11.5px;line-height:11.5px;color:#111;white-space:pre;">Reading</div>
<div style="position:absolute;left:1103.7px;top:620.67px;font-family:'Liberation Sans',sans-serif;font-size:11.5px;line-height:11.5px;color:#111;white-space:pre;">Mode</div>
<svg style="position:absolute;left:1151px;top:567px;" width="16" height="16" viewBox="0 0 16 16" fill="none"><ellipse cx="8" cy="4.5" rx="4.5" ry="3" fill="#7a8088"/><path d="M3 6 L2 11 Q8 15 14 11 L13 6" fill="#eef0f4" stroke="#7a8aa0" stroke-width="1.2"/><ellipse cx="8" cy="11" rx="6" ry="3" fill="none" stroke="#7a8aa0" stroke-width="1.2"/></svg>
<div style="position:absolute;left:1171.6px;top:570.77px;font-family:'Liberation Sans',sans-serif;font-size:11.5px;line-height:11.5px;color:#111;white-space:pre;">Loupe Tool</div>
<svg style="position:absolute;left:1152px;top:593px;" width="14" height="17" viewBox="0 0 14 17" fill="none"><path d="M1.5 1.5 H9 L12.5 5 V15.5 H1.5 Z" fill="#fafafa" stroke="#8a9098" stroke-width="1.1"/><rect x="4" y="7" width="6" height="3" stroke="#8a9098" stroke-width="1"/><path d="M7 3 V6.5 M7 10.5 V14" stroke="#aab" stroke-width="1"/></svg>
<div style="position:absolute;left:1171.6px;top:597.07px;font-family:'Liberation Sans',sans-serif;font-size:11.5px;line-height:11.5px;color:#111;white-space:pre;">Pan &amp; Zoom</div>
<svg style="position:absolute;left:1151px;top:618px;" width="16" height="18" viewBox="0 0 16 18" fill="none"><circle cx="8" cy="5" r="4" stroke="#8a98b0" stroke-width="1.3"/><path d="M7 5 V12 L5 10.5 Q3.5 10 3.5 11.5 L6.5 16 H12 Q13.5 13 13 10 L10 8.5 V5" stroke="#9aa0a8" stroke-width="1.2" fill="#f0f2f6"/></svg>
<div style="position:absolute;left:1171.6px;top:622.57px;font-family:'Liberation Sans',sans-serif;font-size:11.5px;line-height:11.5px;color:#111;white-space:pre;">Touch Mode</div>
<svg style="position:absolute;left:1258px;top:570px;" width="26" height="31" viewBox="0 0 26 31" fill="none"><path d="M2 3 V13 H24 V3" fill="none" stroke="#666" stroke-width="2"/><path d="M9 10 L13 4 L17 10 Z" fill="#4a7ab8"/><path d="M2 28 V17 H24 V28" fill="none" stroke="#666" stroke-width="2"/><path d="M9 20 L13 26 L17 20 Z" fill="#4a7ab8"/></svg>
<div style="position:absolute;left:1257.6px;top:607.57px;font-family:'Liberation Sans',sans-serif;font-size:11.5px;line-height:11.5px;color:#111;white-space:pre;">Split</div>
<div style="position:absolute;left:1259.5px;top:620.67px;font-family:'Liberation Sans',sans-serif;font-size:11.5px;line-height:11.5px;color:#111;white-space:pre;">View</div>
<div style="position:absolute;left:1298px;top:564px;width:98px;height:22px;background:#d6d6d6"></div>
<div style="position:absolute;left:1298px;top:590px;width:97px;height:23px;background:#d6d6d6"></div>
<div style="position:absolute;left:1298px;top:616px;width:111px;height:22px;background:#d6d6d6"></div>
<div style="position:absolute;left:1413px;top:564px;width:93px;height:23px;background:#d6d6d6"></div>
<svg style="position:absolute;left:1304px;top:568px;" width="14" height="14" viewBox="0 0 14 14" fill="none"><circle cx="7" cy="7" r="6" fill="#4a7ab8"/><path d="M7 1 A6 6 0 0 1 7 13 Z" fill="#c87a40"/></svg>
<div style="position:absolute;left:1323.6px;top:571.07px;font-family:'Liberation Sans',sans-serif;font-size:11.5px;line-height:11.5px;color:#111;white-space:pre;">Invert Colors</div>
<svg style="position:absolute;left:1304px;top:594px;" width="14" height="16" viewBox="0 0 14 16" fill="none"><rect x="1.5" y="3.5" width="10" height="11" fill="#f4f4f4" stroke="#8a9098" stroke-width="1.1"/><path d="M5 11 L12 3" stroke="#6a7a90" stroke-width="1.8"/></svg>
<div style="position:absolute;left:1323.6px;top:597.07px;font-family:'Liberation Sans',sans-serif;font-size:11.5px;line-height:11.5px;color:#111;white-space:pre;">Mini-Toolbar</div>
<svg style="position:absolute;left:1305px;top:620px;" width="12" height="16" viewBox="0 0 12 16" fill="none"><path d="M2 1 V13 L5 10 L8 15 L10 14 L7 9 L11 9 Z" fill="#fafafa" stroke="#8a8a8a" stroke-width="0.9"/></svg>
<div style="position:absolute;left:1323.6px;top:622.57px;font-family:'Liberation Sans',sans-serif;font-size:11.5px;line-height:11.5px;color:#111;white-space:pre;">Cursor Position</div>
<div style="position:absolute;left:1419px;top:571.87px;font-family:'Liberation Sans',sans-serif;font-size:7px;line-height:7px;color:#8a8a8a;white-space:pre;letter-spacing:0.3px">ABC</div>
<div style="position:absolute;left:1419px;top:580px;width:15px;height:1px;background:#d0a0a0"></div>
<div style="position:absolute;left:1438.5px;top:571.07px;font-family:'Liberation Sans',sans-serif;font-size:11.5px;line-height:11.5px;color:#111;white-space:pre;">Spell Check</div>
<svg style="position:absolute;left:1420px;top:594px;" width="14" height="15" viewBox="0 0 14 15" fill="none"><path d="M1.5 14 V1.5 H12.5 V5 H5 V14 Z" fill="#fafafa" stroke="#888" stroke-width="1.1"/></svg>
<div style="position:absolute;left:1438.5px;top:597.07px;font-family:'Liberation Sans',sans-serif;font-size:11.5px;line-height:11.5px;color:#111;white-space:pre;">Show Rulers</div>
<svg style="position:absolute;left:1420px;top:621px;" width="14" height="13" viewBox="0 0 14 13" fill="none"><rect x="0.5" y="0.5" width="13" height="12" fill="#dfe8f6" stroke="#5a86c8"/><path d="M0.5 3.5 H13.5" stroke="#3a6ab8" stroke-width="2.5"/><path d="M0 7 H14 M0 10 H14 M4 3 V13 M7 3 V13 M10 3 V13" stroke="#6a96d8" stroke-width="1"/></svg>
<div style="position:absolute;left:1438.5px;top:622.57px;font-family:'Liberation Sans',sans-serif;font-size:11.5px;line-height:11.5px;color:#111;white-space:pre;">Show Grid</div>
<svg style="position:absolute;left:1525px;top:567px;" width="14" height="16" viewBox="0 0 14 16" fill="none"><rect x="1" y="1" width="10" height="4" fill="#e8c84a"/><path d="M11 3 H12.5 V7 H6 V10" fill="none" stroke="#888" stroke-width="1.1"/><rect x="4.5" y="10" width="3" height="6" fill="#777"/></svg>
<div style="position:absolute;left:1545px;top:571.07px;font-family:'Liberation Sans',sans-serif;font-size:11.5px;line-height:11.5px;color:#111;white-space:pre;">Flatten Fields</div>
<div style="position:absolute;left:1519px;top:590px;width:113px;height:23px;background:#d6d6d6"></div>
<svg style="position:absolute;left:1525px;top:593px;" width="16" height="16" viewBox="0 0 16 16" fill="none"><path d="M4 11 L11 3 L14 6 L7 13 Z" fill="#4a7ab8"/><path d="M2 15 L4 11 L7 13 Z" fill="#707880"/></svg>
<div style="position:absolute;left:1545px;top:597.07px;font-family:'Liberation Sans',sans-serif;font-size:11.5px;line-height:11.5px;color:#111;white-space:pre;">Highlight Fields</div>
<svg style="position:absolute;left:1524px;top:618px;" width="18" height="18" viewBox="0 0 18 18" fill="none"><rect x="1.5" y="1.5" width="11" height="10" fill="#f0f0f0" stroke="#8a8a8a" stroke-width="1.1"/><path d="M3 5 H11 M3 8 H8" stroke="#aaa"/><circle cx="12" cy="12" r="4.5" fill="#dfe8f4" stroke="#7a9ac0" stroke-width="1.1"/><path d="M10 13 L13 10" stroke="#4a7ab8" stroke-width="1.3"/></svg>
<div style="position:absolute;left:1545px;top:622.57px;font-family:'Liberation Sans',sans-serif;font-size:11.5px;line-height:11.5px;color:#111;white-space:pre;">Reset Fields</div>
<svg style="position:absolute;left:1651px;top:571px;" width="27" height="30" viewBox="0 0 27 30" fill="none"><path d="M3 2 H18 L24 8 V27 H3 Z" fill="#fafafa" stroke="#6e6e6e" stroke-width="2.2"/><path d="M5 14 L9 11 V17 Z M21 14 L17 11 V17 Z" fill="#4a7ab8"/></svg>
<div style="position:absolute;left:1647px;top:607.57px;font-family:'Liberation Sans',sans-serif;font-size:11.5px;line-height:11.5px;color:#111;white-space:pre;">Fit To</div>
<div style="position:absolute;left:1647px;top:620.67px;font-family:'Liberation Sans',sans-serif;font-size:11.5px;line-height:11.5px;color:#111;white-space:pre;">Width</div>
<svg style="position:absolute;left:1700px;top:567px;" width="13" height="16" viewBox="0 0 13 16" fill="none"><path d="M1 1 H9 L12 4 V15 H1 Z" fill="#fafafa" stroke="#8a8a8a" stroke-width="1"/><circle cx="4" cy="5" r="0.8" fill="#777"/><circle cx="9" cy="5" r="0.8" fill="#777"/><circle cx="4" cy="11" r="0.8" fill="#777"/><circle cx="9" cy="11" r="0.8" fill="#777"/></svg>
<div style="position:absolute;left:1719px;top:571.07px;font-family:'Liberation Sans',sans-serif;font-size:11.5px;line-height:11.5px;color:#111;white-space:pre;">Fit To Page</div>
<svg style="position:absolute;left:1700px;top:593px;" width="13" height="16" viewBox="0 0 13 16" fill="none"><path d="M1 1 H9 L12 4 V15 H1 Z" fill="#fafafa" stroke="#8a8a8a" stroke-width="1"/><text x="6.5" y="11" font-size="6" font-family="Liberation Sans" text-anchor="middle" fill="#777">1:1</text></svg>
<div style="position:absolute;left:1719px;top:597.07px;font-family:'Liberation Sans',sans-serif;font-size:11.5px;line-height:11.5px;color:#111;white-space:pre;">Actual Size</div>
<svg style="position:absolute;left:1698px;top:618px;" width="15" height="16" viewBox="0 0 15 16" fill="none"><circle cx="6" cy="6" r="4.5" fill="#e8eef8" stroke="#7a8a9a" stroke-width="1.2"/><path d="M4 6 H8 M6 4 V8" stroke="#4a7ab8" stroke-width="1.2"/><path d="M9.5 9.5 L13 13" stroke="#c8a060" stroke-width="1.8"/></svg>
<div style="position:absolute;left:1718px;top:622.57px;font-family:'Liberation Sans',sans-serif;font-size:11.5px;line-height:11.5px;color:#111;white-space:pre;">Zoom</div>
<svg style="position:absolute;left:1754px;top:625px;" width="10" height="6" viewBox="0 0 10 6" fill="none"><path d="M1 1 L5 5 L9 1" fill="none" stroke="#222" stroke-width="1.2"/></svg>
<svg style="position:absolute;left:1798px;top:566px;" width="15" height="17" viewBox="0 0 15 17" fill="none"><rect x="1.5" y="1.5" width="12" height="6" fill="#fafafa" stroke="#8a8a8a"/><rect x="1.5" y="9.5" width="12" height="6" fill="#fafafa" stroke="#8a8a8a"/><path d="M3 3.5 H10 M3 5.5 H8 M3 11.5 H10 M3 13.5 H8" stroke="#4a7ab8" stroke-width="1"/></svg>
<div style="position:absolute;left:1818px;top:571.07px;font-family:'Liberation Sans',sans-serif;font-size:11.5px;line-height:11.5px;color:#111;white-space:pre;">Layout</div>
<svg style="position:absolute;left:1857px;top:573px;" width="10" height="6" viewBox="0 0 10 6" fill="none"><path d="M1 1 L5 5 L9 1" fill="none" stroke="#222" stroke-width="1.2"/></svg>
<svg style="position:absolute;left:1798px;top:594px;" width="15" height="14" viewBox="0 0 15 14" fill="none"><path d="M3 6 A5.5 5.5 0 1 0 7.5 2" fill="none" stroke="#3f6fb8" stroke-width="2.2"/><path d="M1 2 L7 0 L6 6 Z" fill="#3f6fb8"/></svg>
<div style="position:absolute;left:1818px;top:597.07px;font-family:'Liberation Sans',sans-serif;font-size:11.5px;line-height:11.5px;color:#111;white-space:pre;">Left</div>
<svg style="position:absolute;left:1798px;top:620px;" width="15" height="14" viewBox="0 0 15 14" fill="none"><path d="M12 6 A5.5 5.5 0 1 1 7.5 2" fill="none" stroke="#3f6fb8" stroke-width="2.2"/><path d="M14 2 L8 0 L9 6 Z" fill="#3f6fb8"/></svg>
<div style="position:absolute;left:1818px;top:622.57px;font-family:'Liberation Sans',sans-serif;font-size:11.5px;line-height:11.5px;color:#111;white-space:pre;">Right</div>
<svg style="position:absolute;left:1889px;top:573px;" width="30" height="26" viewBox="0 0 30 26" fill="none"><rect x="1.5" y="1.5" width="27" height="23" fill="#fafafa" stroke="#6e6e6e" stroke-width="2"/><rect x="1.5" y="1.5" width="27" height="4" fill="#6e6e6e"/><path d="M9 5 V24" stroke="#6e6e6e" stroke-width="2"/><rect x="3.5" y="8" width="4" height="4" fill="#4a7ab8"/><rect x="3.5" y="13" width="4" height="4" fill="#7a9aa0"/><rect x="3.5" y="18" width="4" height="4" fill="#b8c890"/></svg>
<div style="position:absolute;left:1887.4px;top:607.57px;font-family:'Liberation Sans',sans-serif;font-size:11.5px;line-height:11.5px;color:#111;white-space:pre;">Panels</div>
<svg style="position:absolute;left:1898px;top:624px;" width="10" height="6" viewBox="0 0 10 6" fill="none"><path d="M1 1 L5 5 L9 1" fill="none" stroke="#222" stroke-width="1.2"/></svg>
<svg style="position:absolute;left:1936px;top:566px;" width="17" height="17" viewBox="0 0 17 17" fill="none"><rect x="1" y="1" width="10" height="8" fill="#fafafa" stroke="#8a8a8a"/><rect x="3.5" y="3.5" width="10" height="8" fill="#fafafa" stroke="#8a8a8a"/><rect x="6" y="6" width="10" height="9" fill="#fafafa" stroke="#777"/><path d="M6 7.5 H16" stroke="#5a8ac8" stroke-width="1.6"/></svg>
<div style="position:absolute;left:1956.4px;top:571.07px;font-family:'Liberation Sans',sans-serif;font-size:11.5px;line-height:11.5px;color:#111;white-space:pre;">Cascade</div>
<svg style="position:absolute;left:1937px;top:594px;" width="15" height="14" viewBox="0 0 15 14" fill="none"><rect x="1" y="1" width="13" height="12" fill="#fafafa" stroke="#8a8a8a"/><path d="M1 3.5 H14" stroke="#8a8a8a" stroke-width="1.5"/><path d="M7.5 3 V13" stroke="#8a8a8a"/></svg>
<div style="position:absolute;left:1957px;top:597.07px;font-family:'Liberation Sans',sans-serif;font-size:11.5px;line-height:11.5px;color:#111;white-space:pre;">Tile</div>
<svg style="position:absolute;left:1982px;top:599px;" width="10" height="6" viewBox="0 0 10 6" fill="none"><path d="M1 1 L5 5 L9 1" fill="none" stroke="#222" stroke-width="1.2"/></svg>
<div style="position:absolute;left:1937.5px;top:622.57px;font-family:'Liberation Sans',sans-serif;font-size:11.5px;line-height:11.5px;color:#111;white-space:pre;">Minimize All</div>
<div style="position:absolute;left:2016px;top:567px;width:226px;height:69px;background:#f4f4f4;border:1px solid #9a9a9a"></div>
<div style="position:absolute;left:2089px;top:568px;width:65px;height:67px;background:#c9c9c9"></div>
<div style="position:absolute;left:2040px;top:572px;width:23px;height:31px;background:#fdfdfd"></div>
<div style="position:absolute;left:2109px;top:572px;width:24px;height:31px;background:#fdfdfd"></div>
<svg style="position:absolute;left:2113px;top:578px;" width="16" height="12" viewBox="0 0 16 12" fill="none"><path d="M1 2 H15 M1 5 H13 M1 8 H15 M1 10 H9" stroke="#e07090" stroke-width="1"/></svg>
<div style="position:absolute;left:2034px;top:610.60px;font-family:'Liberation Sans',sans-serif;font-size:8.5px;line-height:8.5px;color:#222;white-space:pre;">compiled</div>
<div style="position:absolute;left:2114px;top:610.60px;font-family:'Liberation Sans',sans-serif;font-size:8.5px;line-height:8.5px;color:#222;white-space:pre;">diff</div>
<div style="position:absolute;left:2226px;top:567px;width:16px;height:69px;background:#f4f4f4;border:1px solid #9a9a9a"></div>
<div style="position:absolute;left:2227px;top:589px;width:14px;height:1px;background:#c8c8c8"></div>
<div style="position:absolute;left:2227px;top:612px;width:14px;height:1px;background:#9a9a9a"></div>
<svg style="position:absolute;left:2228px;top:574px;" width="12" height="8" viewBox="0 0 12 8" fill="none"><path d="M1 7 L6 2 L11 7" fill="none" stroke="#aaa" stroke-width="1.1"/></svg>
<svg style="position:absolute;left:2228px;top:597px;" width="12" height="8" viewBox="0 0 12 8" fill="none"><path d="M1 1 L6 6 L11 1" fill="none" stroke="#aaa" stroke-width="1.1"/></svg>
<svg style="position:absolute;left:2228px;top:617px;" width="12" height="12" viewBox="0 0 12 12" fill="none"><path d="M1.5 1.5 L6 6 L10.5 1.5 M1.5 6 L6 10.5 L10.5 6" fill="none" stroke="#333" stroke-width="1.4"/></svg>
<div style="position:absolute;left:1080px;top:660px;width:1920px;height:26px;background:#f0f0f0"></div>
<div style="position:absolute;left:1092.5px;top:668.51px;font-family:'Liberation Sans',sans-serif;font-size:11.8px;line-height:11.8px;color:#111;white-space:pre;">compiled.pdf</div>
<div style="position:absolute;left:1178px;top:665px;width:1px;height:17px;background:#c8c8c8"></div>
<div style="position:absolute;left:1191.6px;top:668.51px;font-family:'Liberation Sans',sans-serif;font-size:11.8px;line-height:11.8px;color:#111;white-space:pre;">diff.pdf</div>
<svg style="position:absolute;left:1251px;top:669px;" width="11" height="11" viewBox="0 0 11 11" fill="none"><path d="M1.5 1.5 L9.5 9.5 M9.5 1.5 L1.5 9.5" stroke="#111" stroke-width="1.5"/></svg>
<div style="position:absolute;left:1179px;top:682px;width:87px;height:3px;background:#4f86c6"></div>
<div style="position:absolute;left:1080px;top:686px;width:24px;height:854px;background:#f0f0f0"></div>
<svg style="position:absolute;left:1085px;top:689px;" width="14" height="16" viewBox="0 0 14 16" fill="none"><path d="M1.5 1.5 H9 L12.5 5 V14.5 H1.5 Z" fill="#fff" stroke="#777" stroke-width="1"/></svg>
<div style="position:absolute;left:1087px;top:711px;width:11px;height:1px;background:#d0d0d0"></div>
<div style="position:absolute;left:1087px;top:741px;width:11px;height:1px;background:#d0d0d0"></div>
<div style="position:absolute;left:1087px;top:771px;width:11px;height:1px;background:#d0d0d0"></div>
<div style="position:absolute;left:1087px;top:801px;width:11px;height:1px;background:#d0d0d0"></div>
<div style="position:absolute;left:1087px;top:831px;width:11px;height:1px;background:#d0d0d0"></div>
<div style="position:absolute;left:1087px;top:861px;width:11px;height:1px;background:#d0d0d0"></div>
<div style="position:absolute;left:1084px;top:719px;width:16px;height:16px;background:#c8c8c8"></div>
<svg style="position:absolute;left:1085px;top:719px;" width="14" height="16" viewBox="0 0 14 16" fill="none"><rect x="6" y="4" width="6" height="12" fill="#4a7ab8"/><path d="M2 9 L5 2 Q6.5 0.5 8 2 L8.5 5 M4.5 10 L7 3" fill="none" stroke="#8c8c8c" stroke-width="0.9"/></svg>
<svg style="position:absolute;left:1087px;top:749px;" width="12" height="17" viewBox="0 0 12 17" fill="none"><path d="M2.5 1 V14" stroke="#8a8a8a" stroke-width="1.6"/><path d="M3 2 H9.5 V7.5 H3 Z" fill="#3f6eb8"/><ellipse cx="3" cy="14.5" rx="2.5" ry="1.3" fill="#8a8a8a"/></svg>
<svg style="position:absolute;left:1087px;top:779px;" width="10" height="17" viewBox="0 0 10 17" fill="none"><path d="M3 5 V13 A2.5 2.5 0 0 0 8 13 V3 A2 2 0 0 0 4 3 V12" fill="none" stroke="#8a8a8a" stroke-width="1.3"/></svg>
<svg style="position:absolute;left:1083px;top:808px;" width="19" height="18" viewBox="0 0 19 18" fill="none"><rect x="1.5" y="4.5" width="9" height="12" fill="none" stroke="#4a5a78"/><path d="M4.5 4.5 V1.5 H13 L16.5 5 V13.5 H10.5" fill="none" stroke="#4a5a78"/><path d="M13 1.5 V5 H16.5" stroke="#4a5a78"/></svg>
<svg style="position:absolute;left:1084px;top:840px;" width="16" height="14" viewBox="0 0 16 14" fill="none"><rect x="1.5" y="1.5" width="13" height="10" fill="#fafafa" stroke="#888"/><circle cx="6" cy="6" r="2.5" fill="none" stroke="#999"/><path d="M4 9 H12" stroke="#999"/></svg>
<svg style="position:absolute;left:1084px;top:868px;" width="18" height="18" viewBox="0 0 18 18" fill="none"><path d="M1.5 5 L5 1.5 H9 L15 7.5 L9.5 13 Z" fill="none" stroke="#5a7ab0" stroke-width="1.1"/><path d="M3 8 L9 14 L16 8" fill="none" stroke="#5a7ab0" stroke-width="1.1"/></svg>
<div style="position:absolute;left:1104px;top:686px;width:299px;height:854px;background:#f0f0f0;border-left:1px solid #b4b4b4;border-right:1px solid #c8c8c8;border-top:1px solid #d8d8d8"></div>
<div style="position:absolute;left:1111px;top:695.02px;font-family:'Liberation Sans',sans-serif;font-size:11.2px;line-height:11.2px;color:#111;white-space:pre;">Bookmarks</div>
<svg style="position:absolute;left:1385px;top:694px;" width="11" height="11" viewBox="0 0 11 11" fill="none"><path d="M1.5 1.5 L9.5 9.5 M9.5 1.5 L1.5 9.5" stroke="#111" stroke-width="1.4"/></svg>
<svg style="position:absolute;left:1105px;top:708px;" width="120" height="30" viewBox="0 0 120 30" fill="none"><rect x="6.5" y="8.5" width="4" height="3" stroke="#707070" stroke-width="1"/><path d="M8.5 11.5 V20 H11.5 M8.5 15.5 H11.5" stroke="#707070" stroke-width="0.9"/><rect x="11.5" y="14" width="4" height="3" stroke="#707070"/><rect x="11.5" y="18.5" width="4" height="3" stroke="#707070"/><rect x="28.5" y="9.5" width="7" height="4.5" stroke="#6a6a6a"/><rect x="28.5" y="16.5" width="7" height="5" stroke="#6a6a6a"/><path d="M46.5 8.5 V20" stroke="#dcdcdc"/><rect x="58" y="10" width="4.5" height="11.5" fill="#4a6ab0"/><path d="M54 16 L56.5 9.5 Q58.5 7.5 60.5 9.5" stroke="#8a8a8a" stroke-width="0.8"/><path d="M63.5 14.5 V21.5 M60 17.8 H67.5" stroke="#5a8070" stroke-width="1.6"/><path d="M75 10.5 H85" stroke="#777" stroke-width="1.4"/><path d="M76.5 11 V21.5 H83.5 V11 M79 12 V20.5 M81.2 12 V20.5" stroke="#8a8a8a" stroke-width="1.1"/><path d="M94.5 8.5 V20" stroke="#dcdcdc"/><path d="M103.5 9 V21 M108 9 V21 M112.5 9 V21" stroke="#555" stroke-width="0.9"/><path d="M102 14.5 H105 M106.5 18.5 H109.5 M111 11.5 H114" stroke="#6a7aa8" stroke-width="1.6"/></svg>
<div style="position:absolute;left:1105px;top:735px;width:297px;height:1px;background:#d6d6d6"></div>
<div style="position:absolute;left:1105px;top:736px;width:297px;height:779px;background:#ffffff"></div>
<div style="position:absolute;left:1112px;top:744px;width:1px;height:161px;background:#e6e6e6"></div>
<div style="position:absolute;left:1113px;top:745px;width:11px;height:1px;background:#e6e6e6"></div>
<svg style="position:absolute;left:1124px;top:737px;" width="13" height="16" viewBox="0 0 13 16" fill="none"><rect x="5" y="3" width="6" height="13" fill="#4a7ab8"/><rect x="5" y="3" width="2" height="13" fill="#ffffff" opacity="0.35"/><path d="M2 8 L4.5 1.5 Q6 0 7.5 1.5 L8 5 M4 9 L6.5 2.5" fill="none" stroke="#8c8c8c" stroke-width="0.9"/></svg>
<div style="position:absolute;left:1144.3px;top:739.82px;font-family:'Liberation Sans',sans-serif;font-size:11.2px;line-height:11.2px;color:#111;white-space:pre;">Highlights</div>
<div style="position:absolute;left:1113px;top:761px;width:11px;height:1px;background:#e6e6e6"></div>
<svg style="position:absolute;left:1124px;top:753px;" width="13" height="16" viewBox="0 0 13 16" fill="none"><rect x="5" y="3" width="6" height="13" fill="#e8c450"/><rect x="5" y="3" width="2" height="13" fill="#ffffff" opacity="0.35"/><path d="M2 8 L4.5 1.5 Q6 0 7.5 1.5 L8 5 M4 9 L6.5 2.5" fill="none" stroke="#8c8c8c" stroke-width="0.9"/></svg>
<div style="position:absolute;left:1144.3px;top:755.82px;font-family:'Liberation Sans',sans-serif;font-size:11.2px;line-height:11.2px;color:#111;white-space:pre;">Abstract</div>
<div style="position:absolute;left:1113px;top:777px;width:11px;height:1px;background:#e6e6e6"></div>
<svg style="position:absolute;left:1124px;top:769px;" width="13" height="16" viewBox="0 0 13 16" fill="none"><rect x="5" y="3" width="6" height="13" fill="#4a7ab8"/><rect x="5" y="3" width="2" height="13" fill="#ffffff" opacity="0.35"/><path d="M2 8 L4.5 1.5 Q6 0 7.5 1.5 L8 5 M4 9 L6.5 2.5" fill="none" stroke="#8c8c8c" stroke-width="0.9"/></svg>
<div style="position:absolute;left:1144.3px;top:771.82px;font-family:'Liberation Sans',sans-serif;font-size:11.2px;line-height:11.2px;color:#111;white-space:pre;">Introduction</div>
<div style="position:absolute;left:1113px;top:793px;width:11px;height:1px;background:#e6e6e6"></div>
<svg style="position:absolute;left:1107px;top:787px;" width="9" height="12" viewBox="0 0 9 12" fill="none"><path d="M2.5 1.5 L6.5 6 L2.5 10.5" fill="none" stroke="#b4b4b4" stroke-width="2"/></svg>
<svg style="position:absolute;left:1124px;top:785px;" width="13" height="16" viewBox="0 0 13 16" fill="none"><rect x="5" y="3" width="6" height="13" fill="#4a7ab8"/><rect x="5" y="3" width="2" height="13" fill="#ffffff" opacity="0.35"/><path d="M2 8 L4.5 1.5 Q6 0 7.5 1.5 L8 5 M4 9 L6.5 2.5" fill="none" stroke="#8c8c8c" stroke-width="0.9"/></svg>
<div style="position:absolute;left:1144.3px;top:787.82px;font-family:'Liberation Sans',sans-serif;font-size:11.2px;line-height:11.2px;color:#111;white-space:pre;">Methods</div>
<div style="position:absolute;left:1113px;top:809px;width:11px;height:1px;background:#e6e6e6"></div>
<svg style="position:absolute;left:1107px;top:803px;" width="9" height="12" viewBox="0 0 9 12" fill="none"><path d="M2.5 1.5 L6.5 6 L2.5 10.5" fill="none" stroke="#b4b4b4" stroke-width="2"/></svg>
<svg style="position:absolute;left:1124px;top:801px;" width="13" height="16" viewBox="0 0 13 16" fill="none"><rect x="5" y="3" width="6" height="13" fill="#4a7ab8"/><rect x="5" y="3" width="2" height="13" fill="#ffffff" opacity="0.35"/><path d="M2 8 L4.5 1.5 Q6 0 7.5 1.5 L8 5 M4 9 L6.5 2.5" fill="none" stroke="#8c8c8c" stroke-width="0.9"/></svg>
<div style="position:absolute;left:1144.3px;top:803.82px;font-family:'Liberation Sans',sans-serif;font-size:11.2px;line-height:11.2px;color:#111;white-space:pre;">Results</div>
<div style="position:absolute;left:1113px;top:825px;width:11px;height:1px;background:#e6e6e6"></div>
<svg style="position:absolute;left:1107px;top:819px;" width="9" height="12" viewBox="0 0 9 12" fill="none"><path d="M2.5 1.5 L6.5 6 L2.5 10.5" fill="none" stroke="#b4b4b4" stroke-width="2"/></svg>
<svg style="position:absolute;left:1124px;top:817px;" width="13" height="16" viewBox="0 0 13 16" fill="none"><rect x="5" y="3" width="6" height="13" fill="#4a7ab8"/><rect x="5" y="3" width="2" height="13" fill="#ffffff" opacity="0.35"/><path d="M2 8 L4.5 1.5 Q6 0 7.5 1.5 L8 5 M4 9 L6.5 2.5" fill="none" stroke="#8c8c8c" stroke-width="0.9"/></svg>
<div style="position:absolute;left:1144.3px;top:819.82px;font-family:'Liberation Sans',sans-serif;font-size:11.2px;line-height:11.2px;color:#111;white-space:pre;">Discussion</div>
<div style="position:absolute;left:1113px;top:841px;width:11px;height:1px;background:#e6e6e6"></div>
<svg style="position:absolute;left:1124px;top:833px;" width="13" height="16" viewBox="0 0 13 16" fill="none"><rect x="5" y="3" width="6" height="13" fill="#4a7ab8"/><rect x="5" y="3" width="2" height="13" fill="#ffffff" opacity="0.35"/><path d="M2 8 L4.5 1.5 Q6 0 7.5 1.5 L8 5 M4 9 L6.5 2.5" fill="none" stroke="#8c8c8c" stroke-width="0.9"/></svg>
<div style="position:absolute;left:1144.3px;top:835.82px;font-family:'Liberation Sans',sans-serif;font-size:11.2px;line-height:11.2px;color:#111;white-space:pre;">Data Availability Statement</div>
<div style="position:absolute;left:1113px;top:857px;width:11px;height:1px;background:#e6e6e6"></div>
<svg style="position:absolute;left:1124px;top:849px;" width="13" height="16" viewBox="0 0 13 16" fill="none"><rect x="5" y="3" width="6" height="13" fill="#4a7ab8"/><rect x="5" y="3" width="2" height="13" fill="#ffffff" opacity="0.35"/><path d="M2 8 L4.5 1.5 Q6 0 7.5 1.5 L8 5 M4 9 L6.5 2.5" fill="none" stroke="#8c8c8c" stroke-width="0.9"/></svg>
<div style="position:absolute;left:1144.3px;top:851.82px;font-family:'Liberation Sans',sans-serif;font-size:11.2px;line-height:11.2px;color:#111;white-space:pre;">References</div>
<div style="position:absolute;left:1113px;top:873px;width:11px;height:1px;background:#e6e6e6"></div>
<svg style="position:absolute;left:1107px;top:867px;" width="9" height="12" viewBox="0 0 9 12" fill="none"><path d="M2.5 1.5 L6.5 6 L2.5 10.5" fill="none" stroke="#b4b4b4" stroke-width="2"/></svg>
<svg style="position:absolute;left:1124px;top:865px;" width="13" height="16" viewBox="0 0 13 16" fill="none"><rect x="5" y="3" width="6" height="13" fill="#4a7ab8"/><rect x="5" y="3" width="2" height="13" fill="#ffffff" opacity="0.35"/><path d="M2 8 L4.5 1.5 Q6 0 7.5 1.5 L8 5 M4 9 L6.5 2.5" fill="none" stroke="#8c8c8c" stroke-width="0.9"/></svg>
<div style="position:absolute;left:1144.3px;top:867.82px;font-family:'Liberation Sans',sans-serif;font-size:11.2px;line-height:11.2px;color:#111;white-space:pre;">Additional Information</div>
<div style="position:absolute;left:1113px;top:889px;width:11px;height:1px;background:#e6e6e6"></div>
<svg style="position:absolute;left:1107px;top:883px;" width="9" height="12" viewBox="0 0 9 12" fill="none"><path d="M2.5 1.5 L6.5 6 L2.5 10.5" fill="none" stroke="#b4b4b4" stroke-width="2"/></svg>
<svg style="position:absolute;left:1124px;top:881px;" width="13" height="16" viewBox="0 0 13 16" fill="none"><rect x="5" y="3" width="6" height="13" fill="#4a7ab8"/><rect x="5" y="3" width="2" height="13" fill="#ffffff" opacity="0.35"/><path d="M2 8 L4.5 1.5 Q6 0 7.5 1.5 L8 5 M4 9 L6.5 2.5" fill="none" stroke="#8c8c8c" stroke-width="0.9"/></svg>
<div style="position:absolute;left:1144.3px;top:883.82px;font-family:'Liberation Sans',sans-serif;font-size:11.2px;line-height:11.2px;color:#111;white-space:pre;">Tables</div>
<div style="position:absolute;left:1113px;top:905px;width:11px;height:1px;background:#e6e6e6"></div>
<svg style="position:absolute;left:1107px;top:899px;" width="9" height="12" viewBox="0 0 9 12" fill="none"><path d="M2.5 1.5 L6.5 6 L2.5 10.5" fill="none" stroke="#b4b4b4" stroke-width="2"/></svg>
<svg style="position:absolute;left:1124px;top:897px;" width="13" height="16" viewBox="0 0 13 16" fill="none"><rect x="5" y="3" width="6" height="13" fill="#4a7ab8"/><rect x="5" y="3" width="2" height="13" fill="#ffffff" opacity="0.35"/><path d="M2 8 L4.5 1.5 Q6 0 7.5 1.5 L8 5 M4 9 L6.5 2.5" fill="none" stroke="#8c8c8c" stroke-width="0.9"/></svg>
<div style="position:absolute;left:1144.3px;top:899.82px;font-family:'Liberation Sans',sans-serif;font-size:11.2px;line-height:11.2px;color:#111;white-space:pre;">Figures</div>
<div style="position:absolute;left:1123px;top:752px;width:276px;height:16px;border:1px solid #5a7898"></div>
<div style="position:absolute;left:1105px;top:1515px;width:297px;height:2px;background:#c8c8c8"></div>
<svg style="position:absolute;left:1113px;top:1524px;" width="8" height="11" viewBox="0 0 8 11" fill="none"><path d="M6 1 L2 5 L6 9" fill="none" stroke="#8c8c8c" stroke-width="2"/></svg>
<svg style="position:absolute;left:1133px;top:1524px;" width="10" height="11" viewBox="0 0 10 11" fill="none"><path d="M1 6 L5 2 L9 6" fill="none" stroke="#8c8c8c" stroke-width="2"/></svg>
<svg style="position:absolute;left:1153px;top:1524px;" width="10" height="11" viewBox="0 0 10 11" fill="none"><path d="M1 2 L5 6 L9 2" fill="none" stroke="#8c8c8c" stroke-width="2"/></svg>
<svg style="position:absolute;left:1173px;top:1524px;" width="8" height="11" viewBox="0 0 8 11" fill="none"><path d="M2 1 L6 5 L2 9" fill="none" stroke="#8c8c8c" stroke-width="2"/></svg>
<div style="position:absolute;left:1409px;top:686px;width:1567px;height:855px;background:#a0a0a0"></div>
<div style="position:absolute;left:1608px;top:686px;width:1168px;height:139px;background:#fff"></div>
<div style="position:absolute;left:1608px;top:832px;width:1168px;height:709px;background:#fff"></div>
<div style="position:absolute;left:2976px;top:686px;width:24px;height:855px;background:#f0f0f0"></div>
<svg style="position:absolute;left:2981px;top:689px;" width="16" height="16" viewBox="0 0 16 16" fill="none"><circle cx="6" cy="6" r="4" fill="none" stroke="#4a7ab8" stroke-width="1.2"/><circle cx="11" cy="11" r="3" fill="none" stroke="#4a7ab8" stroke-width="1.2"/></svg>
<div style="position:absolute;left:2983px;top:711px;width:11px;height:1px;background:#d0d0d0"></div>
<svg style="position:absolute;left:2981px;top:718px;" width="16" height="15" viewBox="0 0 16 15" fill="none"><path d="M2 5 L8 2 L14 5 L8 8 Z" fill="#4a7ab8"/><path d="M2 8 L8 11 L14 8 M2 11 L8 14 L14 11" fill="none" stroke="#4a7ab8" stroke-width="1.4"/></svg>
<div style="position:absolute;left:2981px;top:794px;width:13px;height:33px;background:#dcdcdc"></div>
<div style="position:absolute;left:1080px;top:1541px;width:1920px;height:27px;background:#f0f0f0"></div>
<div style="position:absolute;left:1091px;top:1549.19px;font-family:'Liberation Sans',sans-serif;font-size:11px;line-height:11px;color:#111;white-space:pre;">8.50 x 11.00 in</div>
<div style="position:absolute;left:1175px;top:1544px;width:1px;height:21px;background:#d8d8d8"></div>
<div style="position:absolute;left:1185px;top:1549.19px;font-family:'Liberation Sans',sans-serif;font-size:11px;line-height:11px;color:#111;white-space:pre;">(6.43, 0.23)</div>
<svg style="position:absolute;left:1917px;top:1547px;" width="10" height="12" viewBox="0 0 10 12" fill="none"><path d="M1.5 1 V11" stroke="#4a7ab8" stroke-width="2"/><path d="M8.5 1.5 L3.5 6 L8.5 10.5" fill="none" stroke="#4a7ab8" stroke-width="2"/></svg>
<svg style="position:absolute;left:1943px;top:1547px;" width="8" height="12" viewBox="0 0 8 12" fill="none"><path d="M6 1.5 L2 6 L6 10.5" fill="none" stroke="#4a7ab8" stroke-width="1.8"/></svg>
<div style="position:absolute;left:1963px;top:1545px;width:64px;height:18px;background:#fff;border:1px solid #c0c0c0"></div>
<div style="position:absolute;left:1993px;top:1549.19px;font-family:'Liberation Sans',sans-serif;font-size:11px;line-height:11px;color:#111;white-space:pre;transform:translateX(-50%);">2</div>
<div style="position:absolute;left:2032px;top:1549.19px;font-family:'Liberation Sans',sans-serif;font-size:11px;line-height:11px;color:#111;white-space:pre;">2 of 14</div>
<svg style="position:absolute;left:2080px;top:1547px;" width="8" height="12" viewBox="0 0 8 12" fill="none"><path d="M2 1.5 L6 6 L2 10.5" fill="none" stroke="#4a7ab8" stroke-width="1.8"/></svg>
<svg style="position:absolute;left:2102px;top:1547px;" width="10" height="12" viewBox="0 0 10 12" fill="none"><path d="M8.5 1 V11" stroke="#4a7ab8" stroke-width="2"/><path d="M1.5 1.5 L6.5 6 L1.5 10.5" fill="none" stroke="#4a7ab8" stroke-width="2"/></svg>
<svg style="position:absolute;left:2125px;top:1546px;" width="14" height="14" viewBox="0 0 14 14" fill="none"><circle cx="6" cy="6" r="4" fill="none" stroke="#7a8aa0" stroke-width="1.3"/><path d="M9 9 L13 13" stroke="#d0a050" stroke-width="1.8"/></svg>
<svg style="position:absolute;left:2145px;top:1546px;" width="14" height="14" viewBox="0 0 14 14" fill="none"><circle cx="6" cy="7" r="4" fill="none" stroke="#7a8aa0" stroke-width="1.3"/><path d="M7 1 L12 3 L9 6" fill="none" stroke="#d0a050" stroke-width="1.3"/></svg>
<div style="position:absolute;left:2798px;top:1544px;width:24px;height:22px;background:#d2d2d2"></div>
<svg style="position:absolute;left:2779px;top:1547px;" width="14" height="16" viewBox="0 0 14 16" fill="none"><rect x="1.5" y="1.5" width="11" height="13" fill="#fbfbfb" stroke="#777" stroke-width="1.2"/><path d="M3.5 4 H8 M3.5 6.5 H6 M3.5 9 H10 M3.5 11 H9 M3.5 13 H7" stroke="#4a6a9a" stroke-width="1"/></svg>
<svg style="position:absolute;left:2803px;top:1547px;" width="14" height="16" viewBox="0 0 14 16" fill="none"><rect x="1.5" y="1.5" width="11" height="5" fill="#fbfbfb" stroke="#777" stroke-width="1.2"/><rect x="1.5" y="8.5" width="11" height="6.5" fill="#fbfbfb" stroke="#777" stroke-width="1.2"/><path d="M3.5 3.5 H9 M3.5 11 H8 M3.5 13 H6" stroke="#666" stroke-width="1"/></svg>
<svg style="position:absolute;left:2825px;top:1547px;" width="18" height="16" viewBox="0 0 18 16" fill="none"><path d="M1 1.5 H7.5 V14.5 H1" fill="none" stroke="#777" stroke-width="1.2"/><rect x="9.5" y="1.5" width="7" height="13" fill="#fbfbfb" stroke="#777" stroke-width="1.2"/><path d="M11 4 H15.5 M11 6.5 H15 M11 9 H15.5 M11 11.5 H15 M1.5 9 H5 M1.5 11.5 H5" stroke="#5a7aa8" stroke-width="1"/></svg>
<svg style="position:absolute;left:2849px;top:1546px;" width="18" height="18" viewBox="0 0 18 18" fill="none"><path d="M1 2 H7.5 V7.5 H1 M10 2 H16.5 V7.5 H10 Z M1 10 H7.5 V16.5 M10 10 H16.5 V16.5 H10 Z" fill="none" stroke="#777" stroke-width="1.2"/><path d="M2 3.5 H6 M11.5 4 H15.5 M11.5 5.8 H15 M11.5 12 H15.5 M11.5 14 H15" stroke="#4a7ab8" stroke-width="1"/></svg>
<svg style="position:absolute;left:2877px;top:1547px;" width="12" height="12" viewBox="0 0 12 12" fill="none"><circle cx="5" cy="5" r="3.5" fill="none" stroke="#999" stroke-width="1"/><path d="M3.5 5 H6.5" stroke="#999"/><path d="M7.5 7.5 L11 11" stroke="#bbb" stroke-width="1.3"/></svg>
<div style="position:absolute;left:2899px;top:1545px;width:72px;height:19px;background:#fff;border:1px solid #c4c4c4"></div>
<div style="position:absolute;left:2915px;top:1549.19px;font-family:'Liberation Sans',sans-serif;font-size:11px;line-height:11px;color:#111;white-space:pre;">125%</div>
<div style="position:absolute;left:2952px;top:1546px;width:1px;height:17px;background:#d0d0d0"></div>
<svg style="position:absolute;left:2956px;top:1551px;" width="11" height="8" viewBox="0 0 11 8" fill="none"><path d="M1 1.5 L5.5 6 L10 1.5" fill="none" stroke="#555" stroke-width="1.1"/></svg>
<svg style="position:absolute;left:2980px;top:1547px;" width="13" height="13" viewBox="0 0 13 13" fill="none"><circle cx="5" cy="5" r="3.5" fill="none" stroke="#888" stroke-width="1.1"/><path d="M3.5 5 H6.5 M5 3.5 V6.5" stroke="#888"/><path d="M7.5 7.5 L11.5 11.5" stroke="#aaa" stroke-width="1.3"/></svg>
<div style="position:absolute;left:1800px;top:1083.97px;font-family:'Liberation Sans',sans-serif;font-size:11.5px;line-height:11.5px;color:#111;white-space:pre;transform:translateX(-100%);">13</div>
<div style="position:absolute;left:1800px;top:1126.47px;font-family:'Liberation Sans',sans-serif;font-size:11.5px;line-height:11.5px;color:#111;white-space:pre;transform:translateX(-100%);">14</div>
<div style="position:absolute;left:1800px;top:1188.07px;font-family:'Liberation Sans',sans-serif;font-size:11.5px;line-height:11.5px;color:#111;white-space:pre;transform:translateX(-100%);">15</div>
<div style="position:absolute;left:1800px;top:1229.87px;font-family:'Liberation Sans',sans-serif;font-size:11.5px;line-height:11.5px;color:#111;white-space:pre;transform:translateX(-100%);">16</div>
<div style="position:absolute;left:1800px;top:1252.47px;font-family:'Liberation Sans',sans-serif;font-size:11.5px;line-height:11.5px;color:#111;white-space:pre;transform:translateX(-100%);">17</div>
<div style="position:absolute;left:1800px;top:1275.47px;font-family:'Liberation Sans',sans-serif;font-size:11.5px;line-height:11.5px;color:#111;white-space:pre;transform:translateX(-100%);">18</div>
<div style="position:absolute;left:1800px;top:1298.47px;font-family:'Liberation Sans',sans-serif;font-size:11.5px;line-height:11.5px;color:#111;white-space:pre;transform:translateX(-100%);">19</div>
<div style="position:absolute;left:1800px;top:1321.47px;font-family:'Liberation Sans',sans-serif;font-size:11.5px;line-height:11.5px;color:#111;white-space:pre;transform:translateX(-100%);">20</div>
<div style="position:absolute;left:1800px;top:1432.87px;font-family:'Liberation Sans',sans-serif;font-size:11.5px;line-height:11.5px;color:#111;white-space:pre;transform:translateX(-100%);">21</div>
<div style="position:absolute;left:1800px;top:1473.87px;font-family:'Liberation Sans',sans-serif;font-size:11.5px;line-height:11.5px;color:#111;white-space:pre;transform:translateX(-100%);">22</div>
<div style="position:absolute;left:2190.5px;top:1066.31px;font-family:'Liberation Serif',serif;font-size:33.9px;line-height:33.9px;color:#363636;white-space:pre;transform:translateX(-50%);">SciTex: An AI-Assisted LaTeX Template System for</div>
<div style="position:absolute;left:2190.5px;top:1108.03px;font-family:'Liberation Serif',serif;font-size:33.4px;line-height:33.4px;color:#363636;white-space:pre;transform:translateX(-50%);">Efficient Scientific Manuscript Preparation</div>
<div style="position:absolute;left:2190.5px;top:1176.73px;font-family:'Liberation Serif',serif;font-size:24.2px;line-height:24.2px;color:#363636;white-space:pre;transform:translateX(-50%);">Yusuke Watanabe<span style="font-size:16px;position:relative;top:-9px">a,b,*</span>, Claude Code<span style="font-size:16px;position:relative;top:-9px">c</span></div>
<div style="position:absolute;left:2190.5px;top:1222.10px;font-family:'Liberation Serif',serif;font-size:20.9px;line-height:20.9px;color:#363636;white-space:pre;transform:translateX(-50%);font-style:italic"><span style="font-size:14px;position:relative;top:-8px">a</span>Institute for Advanced Cocreation Studies, Osaka University, 2-2 Yamadaoka, Suita,</div>
<div style="position:absolute;left:2190.5px;top:1245.00px;font-family:'Liberation Serif',serif;font-size:20.9px;line-height:20.9px;color:#363636;white-space:pre;transform:translateX(-50%);font-style:italic">565-0871, Osaka, Japan</div>
<div style="position:absolute;left:2190.5px;top:1268.00px;font-family:'Liberation Serif',serif;font-size:20.9px;line-height:20.9px;color:#363636;white-space:pre;transform:translateX(-50%);font-style:italic"><span style="font-size:14px;position:relative;top:-8px">b</span>NeuroEngineering Research Laboratory, Department of Biomedical Engineering, The</div>
<div style="position:absolute;left:2190.5px;top:1291.00px;font-family:'Liberation Serif',serif;font-size:20.9px;line-height:20.9px;color:#363636;white-space:pre;transform:translateX(-50%);font-style:italic">University of Melbourne, Parkville VIC 3010, Australia</div>
<div style="position:absolute;left:2190.5px;top:1314.00px;font-family:'Liberation Serif',serif;font-size:20.9px;line-height:20.9px;color:#363636;white-space:pre;transform:translateX(-50%);font-style:italic"><span style="font-size:14px;position:relative;top:-8px">c</span>Anthropic, San Francisco, CA, USA</div>
<div style="position:absolute;left:1820px;top:1403px;width:742px;height:1px;background:#222"></div>
<div style="position:absolute;left:1820.6px;top:1421.56px;font-family:'Liberation Serif',serif;font-size:25.6px;line-height:25.6px;color:#222;white-space:pre;font-weight:bold">Abstract</div>
<div style="position:absolute;left:1853px;top:1495.30px;width:708px;font-family:'Liberation Serif',serif;font-size:24px;line-height:24px;color:#363636;text-align:justify;text-align-last:justify;white-space:normal">LaTeX manuscript preparation poses challenges for researchers balanc-</div>
<div style="position:absolute;left:1608px;top:1520px;width:1167px;height:21px;overflow:hidden"><div style="position:absolute;left:212px;top:9.90px;width:741px;font-family:'Liberation Serif',serif;font-size:24px;line-height:24px;color:#363636;text-align:justify;text-align-last:justify;white-space:normal">ing content with formatting requirements. This paper introduces SciTex, a</div></div>
<svg style="position:absolute;left:2470px;top:850px;" width="50" height="40" viewBox="0 0 50 40" fill="none"><path d="M22.5 27.8 L19 23.5 L17.2 20.5 L18.3 18.5 L20.3 18.3 L21.5 20.8 M20.6 17.8 L19.4 14.8 L20.5 13.4 L22 13.4 L23.3 15 L23.6 17.8 M23.1 14 L24.3 12.6 L25.8 12.4 L26.6 13.5 L26.6 17.6 M26.6 13.5 L28.6 13.4 L29.5 14.6 L29.6 18.6 M29.4 16.5 L31.4 15.5 L32.5 16.6 L32.6 19.8 L31.6 23.2 L30.2 25.6 L29.6 27.8" fill="none" stroke="#000" stroke-width="1.15"/></svg>
</body></html>
